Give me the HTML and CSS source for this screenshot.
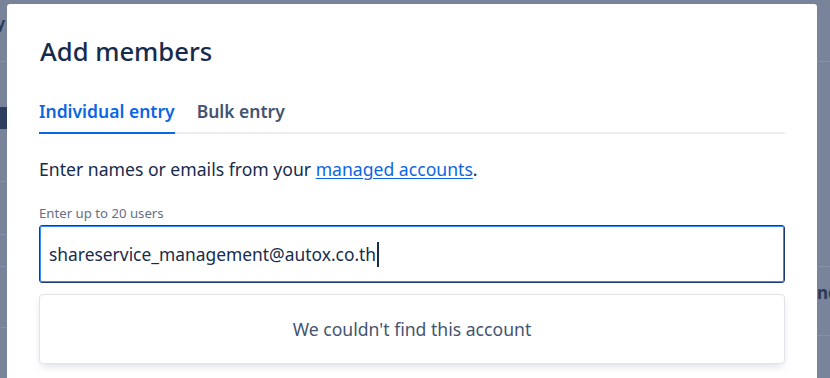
FILE: index.html
```html
<!DOCTYPE html>
<html>
<head>
<meta charset="utf-8">
<link rel="stylesheet" href="styles.css">
</head>
<body>
<div class="backdrop">
  <div class="side side-left">
    <div class="row r1"><span class="glyph">y</span></div>
    <div class="row r2"><span class="navy"></span></div>
    <div class="row r3"></div>
    <div class="row r4"></div>
    <div class="row r5"></div>
    <div class="row r6"></div>
  </div>
  <div class="side side-right">
    <div class="row r1"></div>
    <div class="row rr2"></div>
    <div class="row rr3"><span class="nd">nd</span></div>
    <div class="row rr4"></div>
  </div>
</div>

<div class="modal">
  <h1 class="title">Add members</h1>
  <div class="tabs">
    <div class="tab active">Individual entry</div>
    <div class="tab">Bulk entry</div>
  </div>
  <p class="intro">Enter names or emails from your <a href="#" class="link">managed accounts</a>.</p>
  <label class="label">Enter up to 20 users</label>
  <div class="input">
    <span class="value">shareservice_management@autox.co.th</span><span class="caret"></span>
  </div>
  <div class="menu">We couldn't find this account</div>
</div>
</body>
</html>
```
FILE: styles.css
```css
* { box-sizing: border-box; }
html, body {
  margin: 0;
  width: 830px;
  height: 378px;
  overflow: hidden;
}
body {
  background: #79839a;
  font-family: "Noto Sans", "Open Sans", sans-serif;
  position: relative;
}
.backdrop {
  display: flex;
  justify-content: space-between;
  height: 378px;
}
.side { display: flex; flex-direction: column; }
.side-left { width: 7px; }
.side-right { width: 13px; }
.row { border-bottom: 1px solid #8790a5; position: relative; overflow: hidden; }
.r1 { height: 62px; }
.r2 { height: 120px; }
.r3 { height: 53px; }
.r4 { height: 32px; }
.r5 { height: 61px; }
.r6 { flex: 1; border-bottom: none; }
.rr2 { height: 205px; }
.rr3 { height: 69px; }
.rr4 { flex: 1; border-bottom: none; }
.glyph {
  position: absolute; left: -4px; top: 12px;
  font-size: 16px; font-weight: 700; color: #2b3a58;
}
.navy {
  position: absolute; left: 0; top: 45px; width: 7px; height: 22px;
  background: #2d3d5f;
}
.nd {
  position: absolute; left: 0; top: 14px;
  font-size: 17px; font-weight: 700; color: #2b3a58;
}

.modal {
  position: absolute;
  left: 7px; top: 4px;
  width: 810px; height: 390px;
  background: #fff;
  border-radius: 3px;
  padding: 0 32px 0 32px;
}
.title {
  margin: 30px 0 0 1px;
  font-size: 25.6px;
  font-weight: 500;
  color: #172b4d;
  line-height: 36px;
}
.tabs {
  display: flex;
  margin-top: 28px;
  border-bottom: 2px solid #ebecf0;
  height: 36px;
}
.tab {
  font-size: 17.5px;
  font-weight: 600;
  color: #44546f;
  line-height: 26px;
  padding: 0 0 6px 0;
}
.tab.active {
  color: #0c66e4;
  margin-right: 22px;
  border-bottom: 2px solid #0c66e4;
  margin-bottom: -2px;
}
.intro {
  margin: 22px 0 0 0;
  font-size: 17.6px;
  line-height: 26px;
  color: #172b4d;
}
.link { color: #0c66e4; text-decoration: underline; text-underline-offset: 2px; }
.label {
  display: block;
  margin-top: 22px;
  font-size: 13.2px;
  line-height: 18px;
  color: #626f86;
}
.input {
  margin-top: 3px;
  height: 58px;
  border: 1px solid #1c3b7c;
  box-shadow: inset 0 0 0 1px #388bff;
  border-radius: 3px;
  display: flex;
  align-items: center;
  padding: 0 9px;
  font-size: 17.4px;
  color: #172b4d;
}
.caret {
  display: inline-block;
  width: 2px; height: 25px;
  background: #172b4d;
  margin-left: 1px;
}
.menu {
  margin-top: 11px;
  height: 70px;
  border: 1px solid #e2e3e6;
  border-radius: 4px;
  box-shadow: 0 4px 8px -2px rgba(9,30,66,0.15);
  display: flex;
  align-items: center;
  justify-content: center;
  font-size: 17.6px;
  color: #44546f;
}
```
